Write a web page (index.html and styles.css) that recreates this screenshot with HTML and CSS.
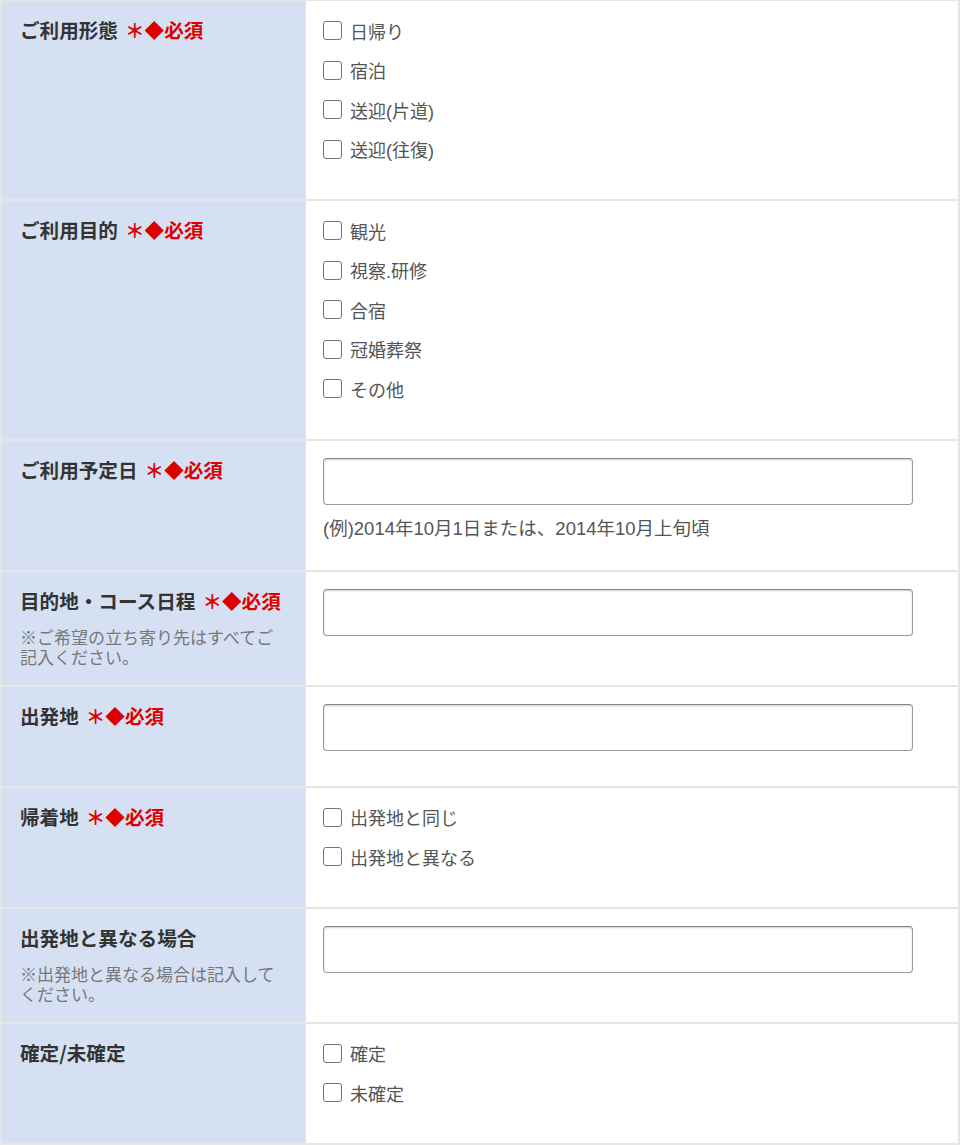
FILE: index.html
```html
<!DOCTYPE html>
<html lang="ja">
<head>
<meta charset="utf-8">
<title>フォーム</title>
<link rel="stylesheet" href="styles.css">
</head>
<body>
<div class="form">
  <div class="row">
    <div class="th"><span class="label">ご利用形態</span><span class="req">＊◆必須</span></div>
    <div class="td checks">
      <label class="check"><span class="box"></span>日帰り</label>
      <label class="check"><span class="box"></span>宿泊</label>
      <label class="check"><span class="box"></span>送迎(片道)</label>
      <label class="check"><span class="box"></span>送迎(往復)</label>
    </div>
  </div>
  <div class="row">
    <div class="th"><span class="label">ご利用目的</span><span class="req">＊◆必須</span></div>
    <div class="td checks">
      <label class="check"><span class="box"></span>観光</label>
      <label class="check"><span class="box"></span>視察.研修</label>
      <label class="check"><span class="box"></span>合宿</label>
      <label class="check"><span class="box"></span>冠婚葬祭</label>
      <label class="check"><span class="box"></span>その他</label>
    </div>
  </div>
  <div class="row">
    <div class="th"><span class="label">ご利用予定日</span><span class="req">＊◆必須</span></div>
    <div class="td field">
      <div class="input"></div>
      <p class="example">(例)2014年10月1日または、2014年10月上旬頃</p>
    </div>
  </div>
  <div class="row">
    <div class="th"><span class="label">目的地・コース日程</span><span class="req">＊◆必須</span>
      <p class="note">※ご希望の立ち寄り先はすべてご記入ください。</p>
    </div>
    <div class="td field">
      <div class="input"></div>
    </div>
  </div>
  <div class="row">
    <div class="th"><span class="label">出発地</span><span class="req">＊◆必須</span></div>
    <div class="td field">
      <div class="input"></div>
    </div>
  </div>
  <div class="row">
    <div class="th"><span class="label">帰着地</span><span class="req">＊◆必須</span></div>
    <div class="td checks">
      <label class="check"><span class="box"></span>出発地と同じ</label>
      <label class="check"><span class="box"></span>出発地と異なる</label>
    </div>
  </div>
  <div class="row">
    <div class="th"><span class="label">出発地と異なる場合</span>
      <p class="note">※出発地と異なる場合は記入してください。</p>
    </div>
    <div class="td field">
      <div class="input"></div>
    </div>
  </div>
  <div class="row">
    <div class="th"><span class="label">確定/未確定</span></div>
    <div class="td checks">
      <label class="check"><span class="box"></span>確定</label>
      <label class="check"><span class="box"></span>未確定</label>
    </div>
  </div>
</div>
</body>
</html>
```

FILE: styles.css
```css
* { box-sizing: border-box; }
html, body { margin: 0; padding: 0; background: #fff; }
body {
  font-family: "Noto Sans CJK JP", "Noto Sans", sans-serif;
  color: #333;
  width: 960px;
}
.form {
  border-top: 1px solid #e6e6e6;
  border-left: 1px solid #e6e6e6;
  border-right: 2px solid #e6e6e6;
}
.row {
  display: grid;
  grid-template-columns: 304px 1fr;
  border-bottom: 2px solid #e6e6e6;
}
.th {
  background: #d5e0f3;
  padding: 15px 18px 18px 19px;
}
.label {
  font-size: 19.6px;
  line-height: 28px;
  font-weight: 700;
  color: #333;
}
.req {
  margin-left: 7px;
  font-size: 19.6px;
  line-height: 28px;
  font-weight: 700;
  color: #dd0000;
}
.note {
  margin: 12px 0 0;
  font-size: 17px;
  line-height: 20px;
  color: #777;
}
.td {
  padding-left: 17px;
  border-left: 1px solid #e6e6e6;
}
.checks {
  padding-top: 10px;
  padding-bottom: 30px;
  display: flex;
  flex-direction: column;
}
.check {
  display: flex;
  align-items: center;
  height: 39.5px;
  font-family: "Liberation Sans", "Noto Sans CJK JP", sans-serif;
  font-size: 18px;
  color: #555;
}
.box {
  width: 19px;
  height: 19px;
  border: 1.6px solid #727272;
  border-radius: 3px;
  margin-right: 8px;
  background: #fff;
  flex: none;
}
.field {
  padding-top: 17px;
  padding-bottom: 35px;
}
.input {
  width: 590px;
  height: 47px;
  border: 1px solid #9a9a9a;
  border-top-color: #878787;
  border-radius: 4px;
  background: #fff;
  box-shadow: inset 0 1px 2px rgba(0, 0, 0, 0.2);
}
.example {
  margin: 12px 0 -6px;
  font-family: "Liberation Sans", "Noto Sans CJK JP", sans-serif;
  font-size: 18.5px;
  line-height: 24px;
  color: #555;
}
```
